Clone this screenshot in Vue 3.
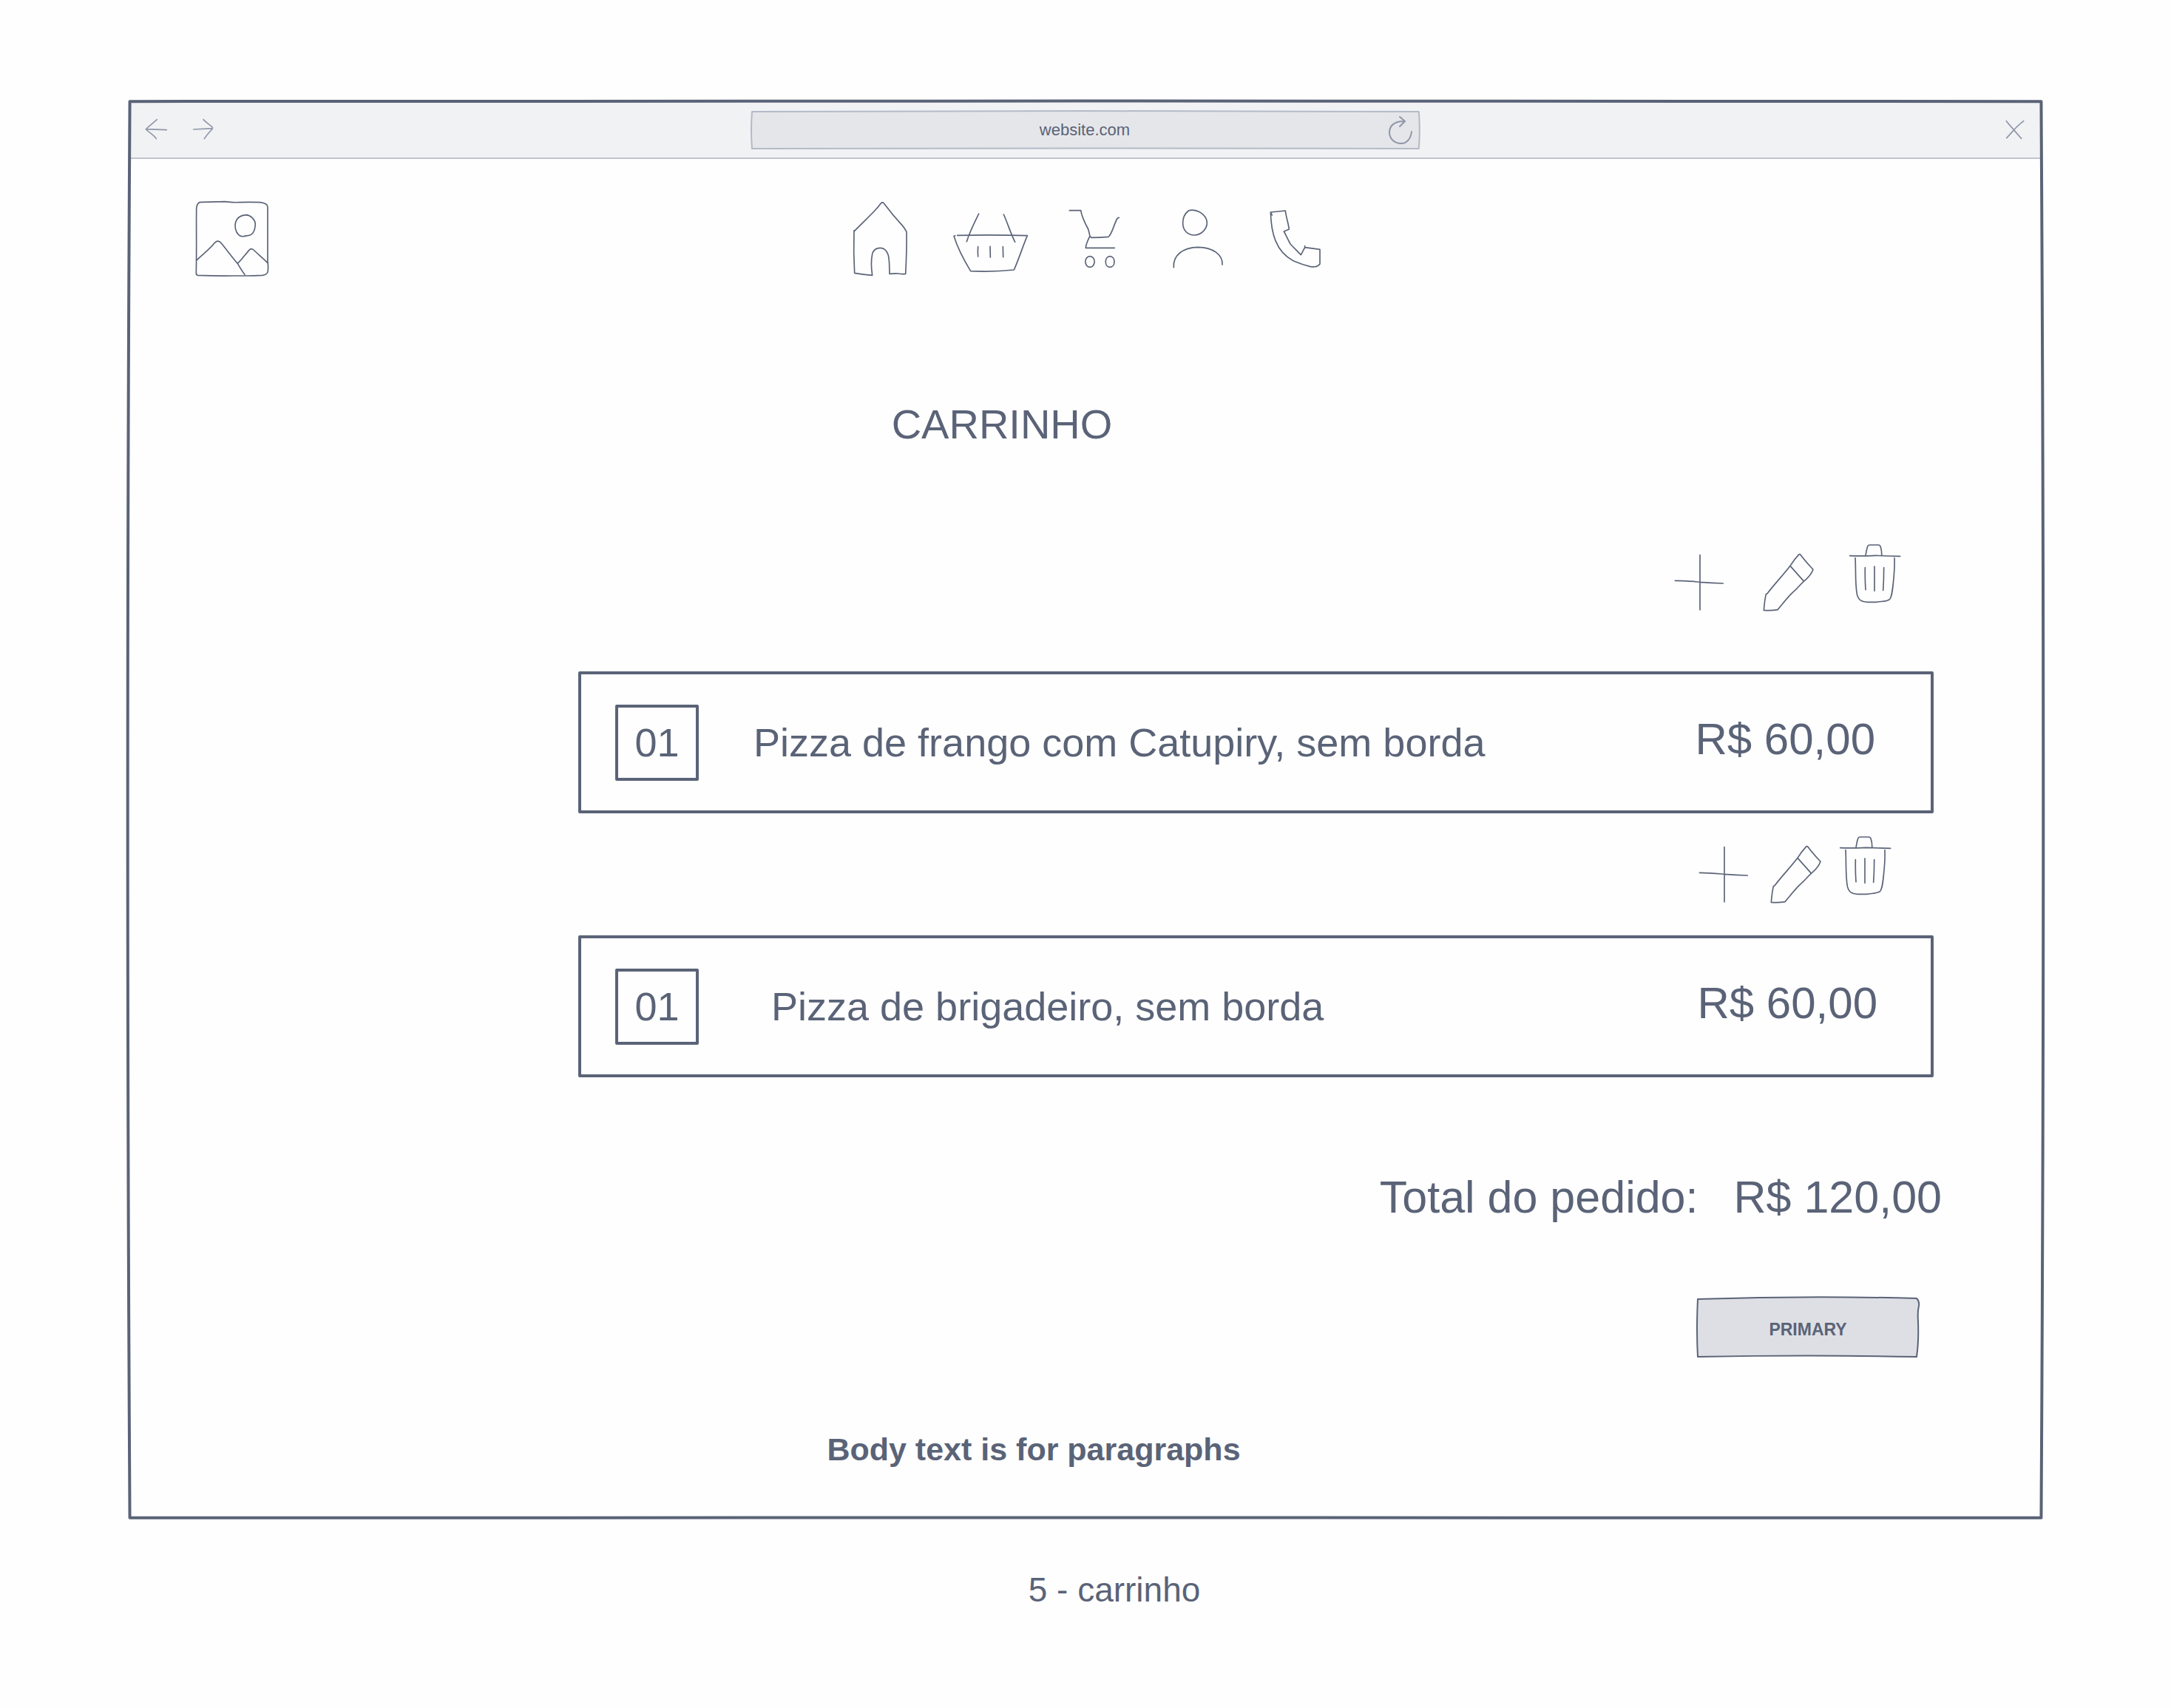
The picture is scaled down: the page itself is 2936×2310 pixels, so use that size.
<script setup>
import { ref } from 'vue'

const address = ref('website.com')

const links = [
  {
    name: 'Início', w: 89, box: '60 0 267 405',
    d: 'M77 172C105 143 133 117 156 93C168 80 178 68 184 60Q190 53 196 60C220 92 247 124 270 149Q281 161 288 176C289 232 287 290 284 346Q270 348 256 345Q238 344 219 346C218 310 219 286 213 268C206 248 193 241 181 241C166 241 153 250 149 266C144 290 144 318 149 352Q112 349 77 343C74 290 73 230 75 170'
  },
  {
    name: 'Cardápio', w: 109, box: '471 0 327 405',
    d: 'M494 190Q636 187 778 191C760 234 741 292 724 330Q640 339 548 335C518 286 494 238 480 193L485 191M581 102C565 136 547 168 532 215M682 105C698 140 710 182 728 217M578 236Q576 256 578 276M627 235L628 279M679 236L680 278'
  },
  {
    name: 'Carrinho', w: 92, box: '42 0 276 405',
    d: 'M49 89H95C99 116 112 141 125 165C130 180 130 188 132 193L137 199Q170 199 207 196C222 184 229 146 242 123Q245 118 250 118M130 196C122 213 115 229 115 241H232M132 275C107 275 108 319 132 319C156 319 157 275 132 275ZM213 275C190 275 190 319 213 319C237 319 237 275 213 275Z'
  },
  {
    name: 'Conta', w: 84, box: '462 0 252 405',
    d: 'M532 90C518 101 509 119 509 139C508 168 527 189 556 189C583 188 607 165 607 139C606 111 580 92 555 88Q541 86 532 90M472 320C468 271 509 239 571 238C630 239 672 268 669 309'
  },
  {
    name: 'Contato', w: 72, box: '858 0 216 405',
    d: 'M871 108L865 96L925 90C927 113 937 140 940 165L919 174C928 190 935 207 945 225C960 241 975 255 988 269L1004 239V233L1004 239L1065 247V306C1057 318 1042 319 1027 317C1003 311 978 302 957 293C922 275 900 249 885 212C870 175 866 138 865 96'
  }
]

const tools = [
  { name: 'Adicionar', w: 75, box: '72 60 225 300', d: 'M177 122V344M76 226C120 226 155 230 178 232Q225 236 271 237' },
  {
    name: 'Editar', w: 72, box: '429 60 216 300',
    d: 'M445 281L450 278C485 233 520 197 543 166Q560 139 577 121Q582 116 586 122C602 144 619 162 636 181C630 198 614 216 598 229C582 243 572 259 552 275C530 296 510 323 492 344Q465 348 436 346C438 322 440 302 445 281M543 166L597 227'
  },
  {
    name: 'Excluir', w: 73, box: '777 60 219 300',
    d: 'M785 125Q830 127 890 124Q940 126 989 127M849 124C852 108 853 96 858 85Q860 81 866 81H901Q908 81 910 90Q915 106 914 124M807 134C810 190 806 234 814 281C820 306 832 311 857 313H893C912 309 935 312 947 301C958 288 961 240 965 190Q967 160 966 134M847 173Q846 222 849 263M885 168V268M923 173Q923 222 920 265'
  }
]

const items = ref([
  { id: 1, qty: '01', name: 'Pizza de frango com Catupiry, sem borda', price: 'R$ 60,00' },
  { id: 2, qty: '01', name: 'Pizza de brigadeiro, sem borda', price: 'R$ 60,00' }
])
</script>

<template>
  <div class="page">
    <div class="window">
      <svg class="outline" viewBox="0 0 1000 1000" preserveAspectRatio="none" aria-hidden="true">
        <path vector-effect="non-scaling-stroke" d="M.6 .6Q500 0 999.4 .6Q1001.6 500 999.4 999.4Q500 999 .6 999.4Q-1.6 500 .6 .6Z" />
      </svg>

      <div class="bar">
        <div class="history">
          <button type="button" aria-label="Voltar">
            <svg width="34" height="33" viewBox="102 114 102 99"><path d="M157 125L116 160Q110 164 116 168C129 180 146 190 154 203M112 164L196 167" /></svg>
          </button>
          <button type="button" aria-label="Avançar">
            <svg width="34" height="33" viewBox="297 114 102 99"><path d="M345 125C357 139 373 146 382 157Q384 161 380 165C369 177 359 186 349 203M305 165L382 161" /></svg>
          </button>
        </div>
        <div class="address">
          <svg class="outline" viewBox="0 0 900 52" preserveAspectRatio="none" aria-hidden="true">
            <path vector-effect="non-scaling-stroke" d="M1 1Q450 -1 899 1Q901 26 899 51Q450 50 1 51Q-1 26 1 1Z" />
          </svg>
          <input v-model="address" type="text" aria-label="Endereço">
          <button type="button" aria-label="Recarregar">
            <svg width="36" height="44" viewBox="0 0 36 44"><path d="M33 24C32 33 27 40 19 40C9 40 3 33 3 25C3 16 10 10 22 10M17 4L24 10L17 17" /></svg>
          </button>
        </div>
        <button class="close" type="button" aria-label="Fechar">
          <svg width="30" height="30" viewBox="270 114 90 90"><path d="M280 125C290 139 303 151 312 163L341 196M350 125C335 137 321 149 312 160L281 194" /></svg>
        </button>
      </div>

      <header class="header">
        <a class="logo" href="#" aria-label="Logo">
          <svg width="108" height="135" viewBox="300 405 324 405">
            <path d="M330 461C360 459 400 459 433 458C455 460 460 462 490 461C530 459 555 460 575 461C594 463 606 470 606 480C606 560 606 640 606 700C609 725 608 735 606 744Q602 755 585 757C540 760 500 759 465 759Q400 760 321 757Q315 755 316 744C318 650 316 560 317 485Q320 464 330 461ZM318 696C340 673 370 653 391 625Q406 611 418 627C445 660 465 688 484 709Q500 737 513 754M484 709C502 692 515 672 533 653Q540 646 549 654C566 671 590 690 605 706M518 512C538 513 554 530 556 548C555 575 545 594 525 596C510 597 510 602 497 598C482 592 473 573 474 552C477 528 492 514 518 512Z" />
          </svg>
        </a>
        <nav class="nav" aria-label="Principal">
          <a v-for="link in links" :key="link.name" href="#" :aria-label="link.name">
            <svg :width="link.w" height="135" :viewBox="link.box"><path :d="link.d" /></svg>
          </a>
        </nav>
      </header>

      <main>
        <h1 class="title">CARRINHO</h1>

        <ul class="items">
          <li v-for="item in items" :key="item.id" class="item">
            <div class="tools">
              <button v-for="tool in tools" :key="tool.name" type="button" :aria-label="tool.name">
                <svg :width="tool.w" height="100" :viewBox="tool.box"><path :d="tool.d" /></svg>
              </button>
            </div>
            <div class="card">
              <input v-model="item.qty" class="qty" type="text" :aria-label="'Quantidade: ' + item.name">
              <span class="name">{{ item.name }}</span>
              <span class="price">{{ item.price }}</span>
            </div>
          </li>
        </ul>

        <p class="total"><span>Total do pedido:</span><span>R$ 120,00</span></p>

        <button class="primary" type="button">
          <svg class="outline" viewBox="0 0 300 82" preserveAspectRatio="none" aria-hidden="true">
            <path d="M1 3Q150 -2 297 2Q301 6 300 12Q298 20 299 34Q300 60 297 81Q150 78 1 81Q-1 45 1 3Z" />
          </svg>
          <span>PRIMARY</span>
        </button>

        <p class="note">Body text is for paragraphs</p>
      </main>
    </div>

    <p class="caption">5 - carrinho</p>
  </div>
</template>

<style>
body {
  margin: 0;
  background: #fefefe;
}
</style>

<style scoped>
.page {
  --ink: #5a6377;
  --soft: #8f97a8;
  padding: 136px 174px;
  color: var(--ink);
  font-family: "Liberation Sans", Arial, sans-serif;
}

h1, p, ul {
  margin: 0;
  padding: 0;
  font-weight: 400;
  list-style: none;
}

button {
  padding: 0;
  border: 0;
  background: none;
  color: inherit;
  font: inherit;
  cursor: pointer;
}

input {
  box-sizing: border-box;
  min-width: 0;
  padding: 0;
  color: inherit;
  font: inherit;
  text-align: center;
}

svg {
  display: block;
  fill: none;
  stroke: var(--ink);
  stroke-width: 5;
  stroke-linecap: round;
  stroke-linejoin: round;
}

.outline {
  position: absolute;
  inset: 0;
  width: 100%;
  height: 100%;
  overflow: visible;
  pointer-events: none;
}

.window {
  position: relative;
  padding-bottom: 69px;
}

.window > .outline {
  z-index: 1;
  stroke-width: 4;
}

.bar {
  display: grid;
  grid-template-columns: 1fr 35% 1fr;
  align-items: center;
  height: 79px;
  box-sizing: border-box;
  border-bottom: 2px solid #bfc4ce;
  background: #f1f2f4;
}

.bar svg {
  stroke: var(--soft);
}

.history {
  display: flex;
  gap: 31px;
  padding-left: 20px;
}

.address {
  position: relative;
  display: flex;
  align-items: center;
  height: 52px;
  margin: 2px 1px 0;
  padding: 0 8px 0 42px;
}

.address .outline {
  fill: #e5e6ea;
  stroke: #b4bac6;
  stroke-width: 2;
}

.address input {
  position: relative;
  flex: 1;
  border: 0;
  background: none;
  font-size: 22px;
}

.address button {
  position: relative;
}

.address button svg {
  stroke-width: 2;
}

.close {
  justify-self: end;
  margin-right: 22px;
}

.header {
  display: grid;
  grid-template-columns: 1fr auto 1fr;
  padding: 40px 84px 0 86px;
}

.logo {
  justify-self: start;
}

.nav {
  display: flex;
  gap: 48px;
}

.title {
  margin-top: 152px;
  padding-right: 226px;
  font-size: 56px;
  line-height: 64px;
  text-align: center;
}

.items {
  margin: 124px 147px 0 608px;
}

.tools {
  display: flex;
  justify-content: flex-end;
  gap: 44px;
  margin-bottom: 78px;
  padding-right: 43px;
}

.card {
  display: flex;
  align-items: center;
  box-sizing: border-box;
  height: 192px;
  padding: 0 75px 0 46px;
  border: 4px solid var(--ink);
  border-radius: 2px;
}

.qty {
  width: 113px;
  height: 103px;
  border: 4px solid var(--ink);
  border-radius: 2px;
  background: none;
  font-size: 54px;
}

.name {
  flex: 1;
  padding-left: 74px;
  font-size: 54px;
}

.price {
  padding-bottom: 10px;
  font-size: 60px;
}

.item + .item {
  margin-top: 25px;
}

.item + .item .tools {
  gap: 21px;
  margin-bottom: 40px;
  padding-right: 56px;
}

.item + .item .card {
  padding-right: 72px;
}

.item + .item .name {
  padding-left: 98px;
}

.total {
  display: flex;
  justify-content: flex-end;
  gap: 48px;
  margin: 128px 136px 0;
  font-size: 61px;
  line-height: 68px;
}

.primary {
  position: relative;
  display: block;
  width: 300px;
  height: 82px;
  margin: 101px 167px 0 auto;
  padding-top: 6px;
  font-size: 23px;
  font-weight: 700;
}

.primary .outline {
  fill: #dedfe4;
  stroke-width: 2;
}

.primary span {
  position: relative;
}

.note {
  margin-top: 99px;
  padding-right: 140px;
  font-size: 43px;
  font-weight: 700;
  line-height: 50px;
  text-align: center;
}

.caption {
  margin-top: 70px;
  padding-left: 78px;
  font-size: 46px;
  line-height: 52px;
  text-align: center;
}
</style>
